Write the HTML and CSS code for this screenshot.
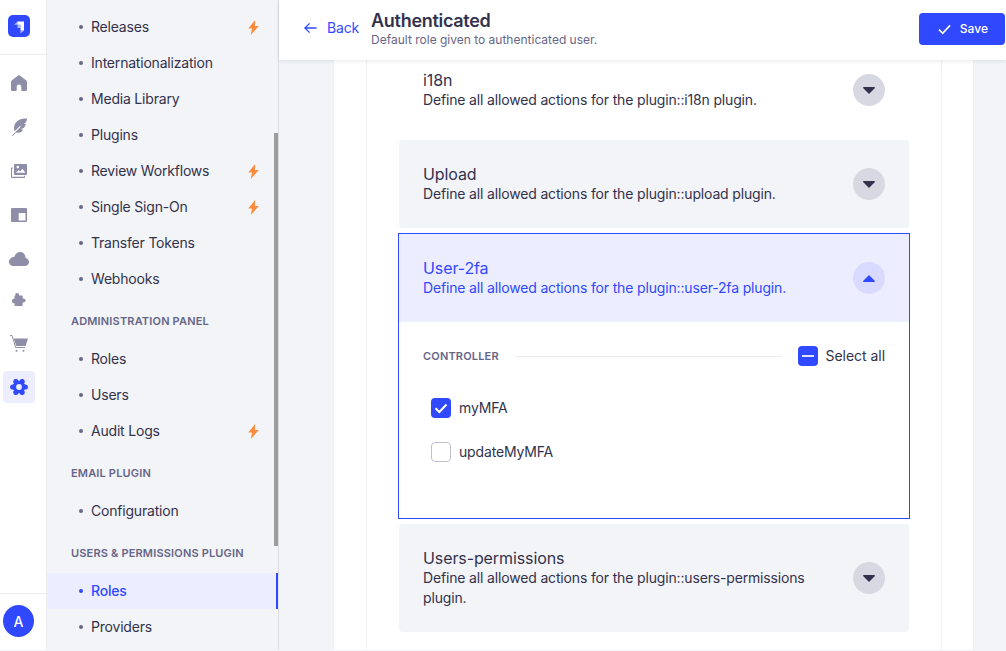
FILE: index.html
```html
<!DOCTYPE html>
<html lang="en">
<head>
<meta charset="utf-8">
<title>Authenticated</title>
<link rel="stylesheet" href="styles.css">
</head>
<body>
<div class="app">
  <nav class="rail">
    <div class="rail-top">
      <svg class="logo" viewBox="0 0 22 22"><rect width="22" height="22" rx="5" fill="#3049ff"/><path d="M9.500 6.500H16V15.500H12.500V9.800H9.500z" fill="#fff"/><path d="M9.500 6.500V9.800H6z M9.500 9.800H12.500V13H9.500z M12.500 15.500H16L12.500 18.500z" fill="#fff" opacity=".6"/></svg>
    </div>
    <div class="rail-items">
      <a class="rail-item"><svg viewBox="0 0 16 16"><path d="M7.200.4.900 5.200C.3 5.600 0 6.300 0 7v7.800c0 .6.500 1.100 1.100 1.100H5c.4 0 .7-.3.700-.7v-3.400a2.300 2.300 0 0 1 4.600 0v3.400c0 .4.300.7.700.7h3.900c.6 0 1.100-.5 1.100-1.100V7c0-.7-.3-1.400-.9-1.800L8.800.4c-.5-.3-1.100-.3-1.600 0z"/></svg></a>
      <a class="rail-item"><svg class="feather" viewBox="0 0 16 18"><path d="M16 .5C9.500.3 3.800 2.500 3 9.500 2.800 11 3.200 12.200 3.700 13.300L9 8l.8.8L1 17.500l.6.600 3.500-3.500C8.500 15.300 11 14 12 11.800L9.800 11l3-1C14 8.500 14.700 7 14.800 5.800H12.800l2.400-1.800C15.800 2.800 16 1.500 16 .5z"/></svg></a>
      <a class="rail-item"><svg class="images" viewBox="0 0 16 14"><path fill-rule="evenodd" d="M4 0h11c.6 0 1 .4 1 1v9c0 .6-.4 1-1 1H4c-.6 0-1-.4-1-1V1c0-.6.400-1 1-1zm.8 8.800h9.600l-3-4-2.300 2.700-1.500-1.200zM6.800 1.800a1.300 1.300 0 1 0 0 2.600 1.300 1.300 0 0 0 0-2.600z"/><path fill-rule="evenodd" d="M1 3.500h1v1H1v8.300h12v-1h1v1.200c0 .6-.4 1-1 1H1c-.6 0-1-.4-1-1V4.500c0-.6.400-1 1-1z"/></svg></a>
      <a class="rail-item"><svg class="layout" viewBox="0 0 16 14"><path fill-rule="evenodd" d="M1 0h14c.6 0 1 .4 1 1v12c0 .6-.4 1-1 1H1c-.6 0-1-.4-1-1V1c0-.6.400-1 1-1zm6.700 5v7.500h6.800V5z"/></svg></a>
      <a class="rail-item cloud"><svg class="wide" viewBox="0 0 20 14"><path d="M11.500 0C8.500 0 6.100 2 5.400 4.700 2.400 4.900 0 7.200 0 10c0 2.300 1.900 4 4.200 4h11.600c2.300 0 4.200-1.800 4.200-4 0-2-1.400-3.600-3.300-4C16.300 2.500 14.200 0 11.500 0z"/></svg></a>
      <a class="rail-item"><svg class="puzzle" viewBox="0 0 14 13"><path d="M5 0c1.200 0 2.100.8 2.100 1.800 0 .3-.1.600-.2.800h2.800c.6 0 1 .4 1 1v2.200c.2-.1.500-.2.800-.2 1.100 0 2 .8 2 1.900s-.9 2-2 2c-.3 0-.6-.1-.8-.2V12c0 .6-.4 1-1 1H3.500c-.6 0-1-.4-1-1v-2c-.3.200-.6.300-1 .300C.7 10.300 0 9.300 0 8s.7-2.300 1.500-2.300c.4 0 .7.100 1 .300V3.600c0-.6.400-1 1-1h.5c-.5-.2-.8-.5-.8-.8C3.200.8 3.900 0 5 0z"/></svg></a>
      <a class="rail-item"><svg class="cart" viewBox="0 0 18 17"><path d="M3.800 3.500H18l-2.400 7.500H6.200z"/><path class="cart-line" d="M0 .6h2.100L5.700 12.500H15"/><circle cx="6.500" cy="15.800" r="1"/><circle cx="13.500" cy="15.800" r="1"/></svg></a>
      <a class="rail-item active"><svg class="cog" viewBox="0 0 18 16"><circle cx="9" cy="8" r="6.300"/><circle cx="15.300" cy="8" r="2.600"/><circle cx="2.700" cy="8" r="2.600"/><circle cx="12.150" cy="2.550" r="2.600"/><circle cx="5.850" cy="2.550" r="2.600"/><circle cx="12.150" cy="13.450" r="2.600"/><circle cx="5.850" cy="13.450" r="2.600"/><circle cx="9" cy="8" r="2.900" fill="#eceeff"/></svg></a>
    </div>
    <div class="rail-bottom"><span class="avatar">A</span></div>
  </nav>

  <aside class="subnav">
    <ul class="menu">
      <li class="menu-row"><span class="bullet"></span><span class="menu-text">Releases</span><svg class="bolt" viewBox="0 0 11 15"><path d="M7.200 0 .2 8.500h3.800L2.800 15l8-9H7z"/></svg></li>
      <li class="menu-row"><span class="bullet"></span><span class="menu-text">Internationalization</span></li>
      <li class="menu-row"><span class="bullet"></span><span class="menu-text">Media Library</span></li>
      <li class="menu-row"><span class="bullet"></span><span class="menu-text">Plugins</span></li>
      <li class="menu-row"><span class="bullet"></span><span class="menu-text">Review Workflows</span><svg class="bolt" viewBox="0 0 11 15"><path d="M7.200 0 .2 8.500h3.800L2.800 15l8-9H7z"/></svg></li>
      <li class="menu-row"><span class="bullet"></span><span class="menu-text">Single Sign-On</span><svg class="bolt" viewBox="0 0 11 15"><path d="M7.200 0 .2 8.500h3.800L2.800 15l8-9H7z"/></svg></li>
      <li class="menu-row"><span class="bullet"></span><span class="menu-text">Transfer Tokens</span></li>
      <li class="menu-row"><span class="bullet"></span><span class="menu-text">Webhooks</span></li>
      <li class="menu-label">Administration Panel</li>
      <li class="menu-row"><span class="bullet"></span><span class="menu-text">Roles</span></li>
      <li class="menu-row"><span class="bullet"></span><span class="menu-text">Users</span></li>
      <li class="menu-row"><span class="bullet"></span><span class="menu-text">Audit Logs</span><svg class="bolt" viewBox="0 0 11 15"><path d="M7.200 0 .2 8.500h3.800L2.800 15l8-9H7z"/></svg></li>
      <li class="menu-label">Email Plugin</li>
      <li class="menu-row"><span class="bullet"></span><span class="menu-text">Configuration</span></li>
      <li class="menu-label">Users &amp; Permissions Plugin</li>
      <li class="menu-row current"><span class="bullet"></span><span class="menu-text">Roles</span></li>
      <li class="menu-row"><span class="bullet"></span><span class="menu-text">Providers</span></li>
    </ul>
    <div class="scroll-thumb"></div>
  </aside>

  <main class="main">
    <header class="topbar">
      <a class="back"><svg viewBox="0 0 14 12"><path d="M6 1 1 6l5 5M1 6h12.500" fill="none" stroke="#3049ff" stroke-width="1.400"/></svg>Back</a>
      <div class="heading">
        <h1>Authenticated</h1>
        <p>Default role given to authenticated user.</p>
      </div>
      <button class="save"><svg viewBox="0 0 14 11"><path d="M1 5.500 5 9.500 13 1" fill="none" stroke="#fff" stroke-width="1.800"/></svg>Save</button>
    </header>
    <div class="sheet">
      <div class="card">
        <section class="acc plain">
          <div class="acc-text"><h2>i18n</h2><p>Define all allowed actions for the plugin::i18n plugin.</p></div>
          <span class="toggle"><svg viewBox="0 0 12 7"><path d="M.8 0h10.400c.7 0 1 .8.500 1.300L6.500 6.600c-.3.300-.7.300-1 0L.3 1.300C-.2.800.1 0 .8 0z"/></svg></span>
        </section>
        <section class="acc">
          <div class="acc-text"><h2>Upload</h2><p>Define all allowed actions for the plugin::upload plugin.</p></div>
          <span class="toggle"><svg viewBox="0 0 12 7"><path d="M.8 0h10.400c.7 0 1 .8.500 1.300L6.500 6.600c-.3.300-.7.300-1 0L.3 1.300C-.2.800.1 0 .8 0z"/></svg></span>
        </section>
        <section class="open">
          <div class="acc selected">
            <div class="acc-text"><h2>User-2fa</h2><p>Define all allowed actions for the plugin::user-2fa plugin.</p></div>
            <span class="toggle"><svg viewBox="0 0 12 7"><path d="M.8 7h10.400c.7 0 1-.8.500-1.300L6.500.4c-.3-.3-.7-.3-1 0L.3 5.700C-.2 6.200.1 7 .8 7z"/></svg></span>
          </div>
          <div class="open-body">
            <div class="ctrl">
              <span class="ctrl-label">Controller</span>
              <span class="ctrl-line"></span>
              <label class="check-row"><span class="box on"><svg viewBox="0 0 20 20"><path d="M4 10h12" stroke="#dfe2ff" stroke-width="2" fill="none"/></svg></span>Select all</label>
            </div>
            <div class="checks">
              <label class="check-row"><span class="box on"><svg viewBox="0 0 20 20"><path d="M4.500 10.200 8.300 14l7.200-7.500" stroke="#fff" stroke-width="2" fill="none"/></svg></span>myMFA</label>
              <label class="check-row"><span class="box"></span>updateMyMFA</label>
            </div>
          </div>
        </section>
        <section class="acc">
          <div class="acc-text"><h2>Users-permissions</h2><p>Define all allowed actions for the plugin::users-permissions plugin.</p></div>
          <span class="toggle"><svg viewBox="0 0 12 7"><path d="M.8 0h10.400c.7 0 1 .8.500 1.300L6.500 6.600c-.3.300-.7.300-1 0L.3 1.300C-.2.800.1 0 .8 0z"/></svg></span>
        </section>
      </div>
    </div>
  </main>
</div>
</body>
</html>
```

FILE: styles.css
```css
* { box-sizing: border-box; }
html, body { margin: 0; height: 100%; overflow: hidden; background: #f3f4f8; }
body { font-family: Inter, "Liberation Sans", sans-serif; color: #32324d; font-size: 14px; letter-spacing: -.16px; }
h1, h2, p, ul { margin: 0; padding: 0; }
ul { list-style: none; }

.app { display: flex; height: 650px; overflow: hidden; }

.rail { width: 47px; flex: none; background: #fff; border-right: 1px solid #eaeaef; display: flex; flex-direction: column; }
.rail-top { height: 55px; flex: none; border-bottom: 1px solid #eaeaef; padding: 15px 0 0 8px; }
.logo { display: block; width: 22px; height: 22px; }
.rail-items { flex: 1; padding: 12px 0 0 3px; display: flex; flex-direction: column; gap: 12px; }
.rail-item { width: 32px; height: 32px; border-radius: 4px; display: flex; align-items: center; justify-content: center; }
.rail-item.cloud { margin-bottom: -4px; }
.rail-item svg { width: 16px; height: 16px; fill: #8e8ea9; }
.rail-item svg.wide { width: 20px; height: 14px; }
.rail-item svg.feather { width: 16px; height: 18px; }
.rail-item svg.images { width: 16px; height: 14px; }
.rail-item svg.layout { width: 16px; height: 14px; }
.rail-item svg.puzzle { width: 14px; height: 13px; }
.rail-item svg.cart { width: 18px; height: 17px; }
.rail-item svg.cog { width: 18px; height: 16px; }
.cart-line { fill: none; stroke: #8e8ea9; stroke-width: 1; }
.rail-item.active { background: #eceeff; }
.rail-item.active svg { fill: #3049ff; }
.rail-bottom { height: 57px; flex: none; border-top: 1px solid #eaeaef; padding: 11px 0 0 3px; }
.avatar { display: flex; align-items: center; justify-content: center; width: 31px; height: 32px; border-radius: 50%; background: #3049ff; color: #fff; font-size: 14px; font-weight: 500; }

.subnav { position: relative; width: 232px; flex: none; background: #f3f4f8; border-right: 1px solid #dcdce4; overflow: hidden; }
.menu { padding-top: 9px; }
.menu-row { height: 36px; display: flex; align-items: center; padding-left: 32px; padding-right: 19px; position: relative; line-height: 20px; letter-spacing: -.2px; }
.bullet { width: 4px; height: 4px; border-radius: 50%; background: #666687; flex: none; margin-right: 8px; }
.menu-text { flex: 1; }
.bolt { width: 11px; height: 15px; fill: #fb8b3d; flex: none; }
.menu-label { height: 44px; padding: 16px 0 0 24px; font-size: 11px; line-height: 16px; font-weight: 600; letter-spacing: .17px; text-transform: uppercase; color: #666687; }
.menu-row.current { background: #eceeff; color: #3049ff; border-right: 2px solid #3049ff; font-weight: 500; }
.menu-row.current .bullet { background: #3049ff; }
.scroll-thumb { position: absolute; right: 0; top: 133px; width: 4px; height: 413px; background: #9c9c9c; }

.main { flex: 1; min-width: 0; display: flex; flex-direction: column; }
.topbar { position: relative; z-index: 2; height: 60px; flex: none; background: #fff; box-shadow: 0 1px 4px rgba(33, 33, 52, .1); display: flex; align-items: center; padding: 0 1px 0 25px; }
.back { display: flex; align-items: center; gap: 10px; color: #3049ff; line-height: 20px; margin-top: -4px; }
.back svg { width: 13px; height: 12px; }
.heading { margin-left: 12px; flex: 1; margin-top: -2px; }
h1 { font-size: 18px; line-height: 22px; font-weight: 600; letter-spacing: -.3px; }
.heading p { font-size: 12px; line-height: 16px; color: #666687; letter-spacing: 0; }
.save { width: 86px; height: 32px; margin-top: -2px; border: 0; border-radius: 4px; background: #3049ff; color: #fff; font: 500 12px/16px Inter, "Liberation Sans", sans-serif; letter-spacing: .1px; display: flex; align-items: center; justify-content: center; gap: 9px; padding: 0 0 0 2px; }
.save svg { width: 13px; height: 11px; }

.sheet { width: 639px; margin: -14px 0 0 55px; padding: 0 31px 0 32px; background: #fff; box-shadow: 0 1px 2px rgba(33, 33, 52, .04); flex: 1; }
.card { height: 100%; padding: 0 32px; border: solid #f1f1f6; border-width: 0 1px; background: #fff; display: flex; flex-direction: column; }

.acc { display: flex; align-items: center; gap: 16px; padding: 24px; background: #f3f4f8; border-radius: 4px; margin-top: 6px; }
.acc.plain { background: #fff; margin-top: 0; }
.acc-text { flex: 1; min-width: 0; }
h2 { font-size: 16px; line-height: 20px; font-weight: 400; letter-spacing: -.1px; }
.acc-text p { line-height: 20px; }
.toggle { width: 32px; height: 32px; flex: none; border-radius: 50%; background: #d8d8e2; display: flex; align-items: center; justify-content: center; }
.toggle svg { width: 12px; height: 7px; fill: #32324d; }

.open { border: 1px solid #3049ff; margin: 5px -1px -1px; height: 286px; flex: none; background: #fff; }
.acc.selected { background: #eceeff; color: #3049ff; border-radius: 0; margin: 0; }
.selected .toggle { background: #d9daff; }
.selected .toggle svg { fill: #3049ff; }
.open-body { padding: 24px 24px 0; }
.ctrl { display: flex; align-items: center; height: 20px; }
.ctrl-label { font-size: 11px; line-height: 16px; font-weight: 600; letter-spacing: .17px; text-transform: uppercase; color: #666687; }
.ctrl-line { flex: 1; height: 1px; background: #eaeaef; margin: 0 16px; }
.check-row { display: flex; align-items: center; gap: 8px; line-height: 20px; }
.ctrl .check-row { letter-spacing: -.04px; }
.box { width: 20px; height: 20px; border-radius: 4px; border: 1px solid #c0c0cf; background: #fff; flex: none; }
.box.on { border: 0; background: #3049ff; }
.box svg { display: block; width: 20px; height: 20px; }
.checks { padding: 32px 0 0 8px; display: flex; flex-direction: column; gap: 24px; }
```
